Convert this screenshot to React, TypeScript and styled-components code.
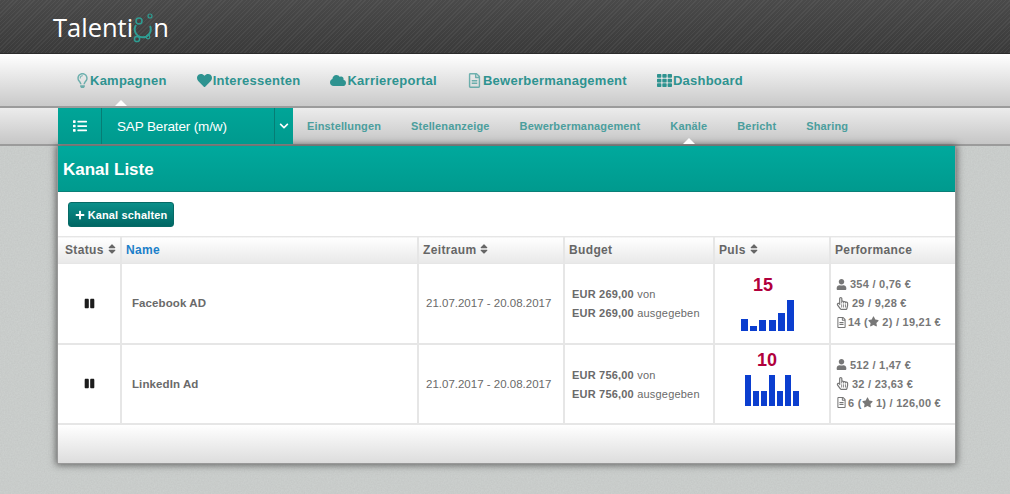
import React from "react";
import styled, { createGlobalStyle } from "styled-components";
import {
  FaChevronDown,
  FaCloud,
  FaHeart,
  FaList,
  FaPause,
  FaPlus,
  FaRegFileAlt,
  FaRegHandPointer,
  FaRegLightbulb,
  FaSort,
  FaStar,
  FaTh,
  FaUser,
} from "react-icons/fa";

const noise = encodeURIComponent(
  `<svg xmlns="http://www.w3.org/2000/svg" width="200" height="200"><filter id="n"><feTurbulence type="fractalNoise" baseFrequency="0.7" numOctaves="2"/><feColorMatrix values="0 0 0 0 0.4 0 0 0 0 0.4 0 0 0 0 0.4 0 0 0 0.3 0"/></filter><rect width="200" height="200" filter="url(#n)"/></svg>`
);

const GlobalStyle = createGlobalStyle`
  html, body {
    margin: 0;
    height: 494px;
    overflow: hidden;
    font-family: "Liberation Sans", Arial, sans-serif;
    background: #ced2d0 url("data:image/svg+xml,${noise}");
  }
`;

const TopBar = styled.header`
  height: 53px;
  padding-left: 53px;
  display: flex;
  align-items: center;
  border-bottom: 1px solid #2c2c2c;
  background:
    repeating-linear-gradient(135deg, rgba(255, 255, 255, 0.05) 0 1px, transparent 1px 3px),
    linear-gradient(#4a4a4a, #3a3a3a);
`;

const Logo = styled.div`
  display: flex;
  align-items: center;
  height: 44px;
  color: #fff;
  font: 400 25.5px "Open Sans", sans-serif;
`;

const LogoMark = styled.svg`
  width: 20px;
  height: 40px;
  margin-top: 3px;
  fill: none;
  stroke: #2f9e93;
`;

const MainNav = styled.nav`
  height: 54px;
  padding-left: 76px;
  display: flex;
  align-items: center;
  gap: 30px;
  box-sizing: border-box;
  background: linear-gradient(#ffffff, #c9c9c9);
  border-bottom: 2px solid #9b9b9b;
`;

const MainItem = styled.a<{ $icon?: number; $paleIcon?: boolean }>`
  position: relative;
  height: 52px;
  display: flex;
  align-items: center;
  gap: 1px;
  color: #2e9390;
  font-size: 13px;
  font-weight: 700;
  letter-spacing: 0.25px;
  svg {
    width: ${(p) => p.$icon ?? 15}px;
    height: 15px;
    opacity: ${(p) => (p.$paleIcon ? 0.65 : 1)};
  }
`;

const Caret = styled.span<{ $color: string }>`
  position: absolute;
  left: 50%;
  bottom: 0;
  margin-left: -6px;
  width: 0;
  height: 0;
  border-left: 6px solid transparent;
  border-right: 6px solid transparent;
  border-bottom: 6px solid ${(p) => p.$color};
`;

const SubNav = styled.nav`
  height: 38px;
  padding-left: 58px;
  display: flex;
  box-sizing: border-box;
  background: linear-gradient(#ececec, #c6c6c6);
  border-bottom: 2px solid #9b9b9b;
`;

const CampaignPicker = styled.div`
  width: 235px;
  display: flex;
  color: #fff;
  background: linear-gradient(#00a598, #009a8e);
`;

const PickerCell = styled.div<{ $width: number }>`
  width: ${(p) => p.$width}px;
  display: flex;
  align-items: center;
  justify-content: center;
  box-sizing: border-box;
  border-right: 1px solid #067d75;
  &:last-child {
    border-right: 0;
  }
`;

const PickerTitle = styled(PickerCell)`
  justify-content: flex-start;
  padding-left: 15px;
  font-size: 13.5px;
  letter-spacing: -0.15px;
`;

const SubItems = styled.div`
  display: flex;
  gap: 30px;
  padding-left: 14px;
`;

const SubItem = styled.a`
  position: relative;
  display: flex;
  align-items: center;
  color: #4b9e9d;
  font-size: 11px;
  font-weight: 700;
  letter-spacing: 0.15px;
`;

const Panel = styled.main`
  width: 897px;
  margin-left: 57px;
  border: 1px solid #999;
  border-top: 0;
  background: #fff;
  box-shadow: 0 0 7px 1px rgba(60, 60, 60, 0.75);
`;

const PanelHead = styled.h1`
  margin: 0;
  height: 43px;
  padding: 2px 0 0 5px;
  display: flex;
  align-items: center;
  color: #fff;
  font-size: 17px;
  font-weight: 700;
  background: linear-gradient(#00a99d, #009a8e);
  border-bottom: 1px solid #0a7f77;
`;

const Toolbar = styled.div`
  height: 44px;
  padding: 10px 0 0 10px;
  box-sizing: border-box;
`;

const AddButton = styled.button`
  height: 25px;
  width: 106px;
  padding: 0;
  display: flex;
  align-items: center;
  justify-content: center;
  gap: 3px;
  border: 1px solid #066a66;
  border-radius: 3px;
  color: #fff;
  font: 700 11px "Liberation Sans", sans-serif;
  letter-spacing: 0.15px;
  background: linear-gradient(#0b8f8a, #006764);
`;

const Table = styled.table`
  width: 897px;
  table-layout: fixed;
  border-collapse: collapse;
  color: #6a6a6a;
  font-size: 11px;
`;

const HeadCell = styled.th<{ $active?: boolean }>`
  height: 26px;
  padding: 0 0 0 4px;
  text-align: left;
  font-size: 12px;
  letter-spacing: 0.35px;
  color: ${(p) => (p.$active ? "#1b7fc9" : "#666")};
  background: linear-gradient(#ffffff, #e8e8e8);
  border: 1px solid #e6e6e6;
  border-left-width: 2px;
  &:first-child {
    border-left: 0;
    padding-left: 7px;
  }
  &:last-child {
    border-right: 0;
  }
  svg {
    font-size: 12px;
    vertical-align: -1px;
    margin-left: 2px;
  }
`;

const Cell = styled.td`
  height: 80px;
  padding: 0 0 0 7px;
  box-sizing: border-box;
  border: 1px solid #e6e6e6;
  border-left-width: 2px;
  border-bottom-width: 2px;
  &:first-child {
    border-left: 0;
  }
  &:last-child {
    border-right: 0;
  }
`;

const StatusCell = styled(Cell)`
  padding: 0;
  text-align: center;
  color: #1c1c1c;
  font-size: 11px;
  line-height: 0;
`;

const NameCell = styled(Cell)`
  padding-left: 10px;
  font-size: 11.5px;
  font-weight: 700;
  letter-spacing: 0.1px;
`;

const DateCell = styled(Cell)`
  font-size: 11.5px;
`;

const BudgetCell = styled(Cell)`
  padding-top: 2px;
`;

const BudgetLine = styled.div`
  line-height: 19px;
  letter-spacing: 0.2px;
  strong {
    font-weight: 700;
  }
`;

const Pulse = styled.div<{ $offset: number; $lift: number }>`
  display: flex;
  flex-direction: column;
  align-items: flex-start;
  padding: 0 0 ${(p) => p.$lift}px ${(p) => p.$offset}px;
`;

const PulseScore = styled.div`
  margin: 0 0 4px 12px;
  color: #b1003c;
  font-size: 18px;
  font-weight: 700;
  line-height: 20px;
`;

const Bars = styled.div<{ $gap: number }>`
  display: flex;
  align-items: flex-end;
  gap: ${(p) => p.$gap}px;
  height: 32px;
`;

const Bar = styled.span<{ $height: number; $width: number }>`
  width: ${(p) => p.$width}px;
  height: ${(p) => p.$height}px;
  background: #0b3ecf;
`;

const PerfCell = styled(Cell)`
  padding-left: 5px;
`;

const PerfLine = styled.div`
  display: flex;
  align-items: center;
  gap: 3px;
  height: 19px;
  font-weight: 700;
  letter-spacing: 0.25px;
  color: #777;
  svg {
    color: #777;
  }
`;

const DocIcon = styled(FaRegFileAlt)`
  font-size: 11px;
  margin-right: -2px;
`;

const InlineStar = styled(FaStar)`
  font-size: 11px;
  vertical-align: -1px;
`;

const PanelFoot = styled.div`
  height: 38px;
  background: linear-gradient(#ffffff, #dddddd);
`;

const Sorted = ({ label }: { label: string }) => (
  <>
    {label}
    <FaSort />
  </>
);

type Row = {
  name: string;
  budget: string;
  score: number;
  barsOffset: number;
  lift: number;
  barWidth: number;
  barGap: number;
  bars: number[];
  reach: string;
  clicks: string;
  applied: string;
  stars: string;
  cost: string;
};

const rows: Row[] = [
  {
    name: "Facebook AD",
    budget: "EUR 269,00",
    score: 15,
    barsOffset: 19,
    lift: 0,
    barWidth: 7,
    barGap: 2.2,
    bars: [12, 5, 11, 11, 18, 31],
    reach: "354 / 0,76 €",
    clicks: "29 / 9,28 €",
    applied: "14",
    stars: "2",
    cost: "19,21 €",
  },
  {
    name: "LinkedIn Ad",
    budget: "EUR 756,00",
    score: 10,
    barsOffset: 23,
    lift: 12,
    barWidth: 6,
    barGap: 2,
    bars: [31, 15, 15, 31, 15, 31, 15],
    reach: "512 / 1,47 €",
    clicks: "32 / 23,63 €",
    applied: "6",
    stars: "1",
    cost: "126,00 €",
  },
];

export default function App() {
  return (
    <>
      <GlobalStyle />
      <TopBar>
        <Logo>
          Talenti
          <LogoMark viewBox="0 0 20 40">
            <path d="M3 17a8 8 0 1 0 14 1" strokeWidth="2" />
            <circle cx="6" cy="13" r="3" strokeWidth="1.5" />
            <circle cx="17" cy="8" r="2" strokeWidth="1.2" />
            <circle cx="4" cy="31" r="2.6" strokeWidth="1.5" />
            <circle cx="15" cy="29" r="1.8" strokeWidth="1.2" />
          </LogoMark>
          n
        </Logo>
      </TopBar>
      <MainNav>
        <MainItem $icon={13} $paleIcon>
          <FaRegLightbulb /> Kampagnen
          <Caret $color="#fff" />
        </MainItem>
        <MainItem>
          <FaHeart /> Interessenten
        </MainItem>
        <MainItem $icon={16}>
          <FaCloud /> Karriereportal
        </MainItem>
        <MainItem $paleIcon>
          <FaRegFileAlt /> Bewerbermanagement
        </MainItem>
        <MainItem>
          <FaTh /> Dashboard
        </MainItem>
      </MainNav>
      <SubNav>
        <CampaignPicker>
          <PickerCell $width={44}>
            <FaList size={14} />
          </PickerCell>
          <PickerTitle $width={173}>SAP Berater (m/w)</PickerTitle>
          <PickerCell $width={18}>
            <FaChevronDown size={10} />
          </PickerCell>
        </CampaignPicker>
        <SubItems>
          <SubItem>Einstellungen</SubItem>
          <SubItem>Stellenanzeige</SubItem>
          <SubItem>Bewerbermanagement</SubItem>
          <SubItem>
            Kanäle
            <Caret $color="#fff" />
          </SubItem>
          <SubItem>Bericht</SubItem>
          <SubItem>Sharing</SubItem>
        </SubItems>
      </SubNav>
      <Panel>
        <PanelHead>Kanal Liste</PanelHead>
        <Toolbar>
          <AddButton>
            <FaPlus size={10} /> Kanal schalten
          </AddButton>
        </Toolbar>
        <Table>
          <colgroup>
            <col width={63} />
            <col width={297} />
            <col width={146} />
            <col width={150} />
            <col width={116} />
            <col width={125} />
          </colgroup>
          <thead>
            <tr>
              <HeadCell>
                <Sorted label="Status" />
              </HeadCell>
              <HeadCell $active>Name</HeadCell>
              <HeadCell>
                <Sorted label="Zeitraum" />
              </HeadCell>
              <HeadCell>Budget</HeadCell>
              <HeadCell>
                <Sorted label="Puls" />
              </HeadCell>
              <HeadCell>Performance</HeadCell>
            </tr>
          </thead>
          <tbody>
            {rows.map((row) => (
              <tr key={row.name}>
                <StatusCell>
                  <FaPause />
                </StatusCell>
                <NameCell>{row.name}</NameCell>
                <DateCell>21.07.2017 - 20.08.2017</DateCell>
                <BudgetCell>
                  <BudgetLine>
                    <strong>{row.budget}</strong> von
                  </BudgetLine>
                  <BudgetLine>
                    <strong>{row.budget}</strong> ausgegeben
                  </BudgetLine>
                </BudgetCell>
                <Cell>
                  <Pulse $offset={row.barsOffset} $lift={row.lift}>
                    <PulseScore>{row.score}</PulseScore>
                    <Bars $gap={row.barGap}>
                      {row.bars.map((h, i) => (
                        <Bar key={i} $height={h} $width={row.barWidth} />
                      ))}
                    </Bars>
                  </Pulse>
                </Cell>
                <PerfCell>
                  <PerfLine>
                    <FaUser size={11} /> {row.reach}
                  </PerfLine>
                  <PerfLine>
                    <FaRegHandPointer size={13} /> {row.clicks}
                  </PerfLine>
                  <PerfLine>
                    <DocIcon />
                    <span>
                      {row.applied} (<InlineStar /> {row.stars}) / {row.cost}
                    </span>
                  </PerfLine>
                </PerfCell>
              </tr>
            ))}
          </tbody>
        </Table>
        <PanelFoot />
      </Panel>
    </>
  );
}
